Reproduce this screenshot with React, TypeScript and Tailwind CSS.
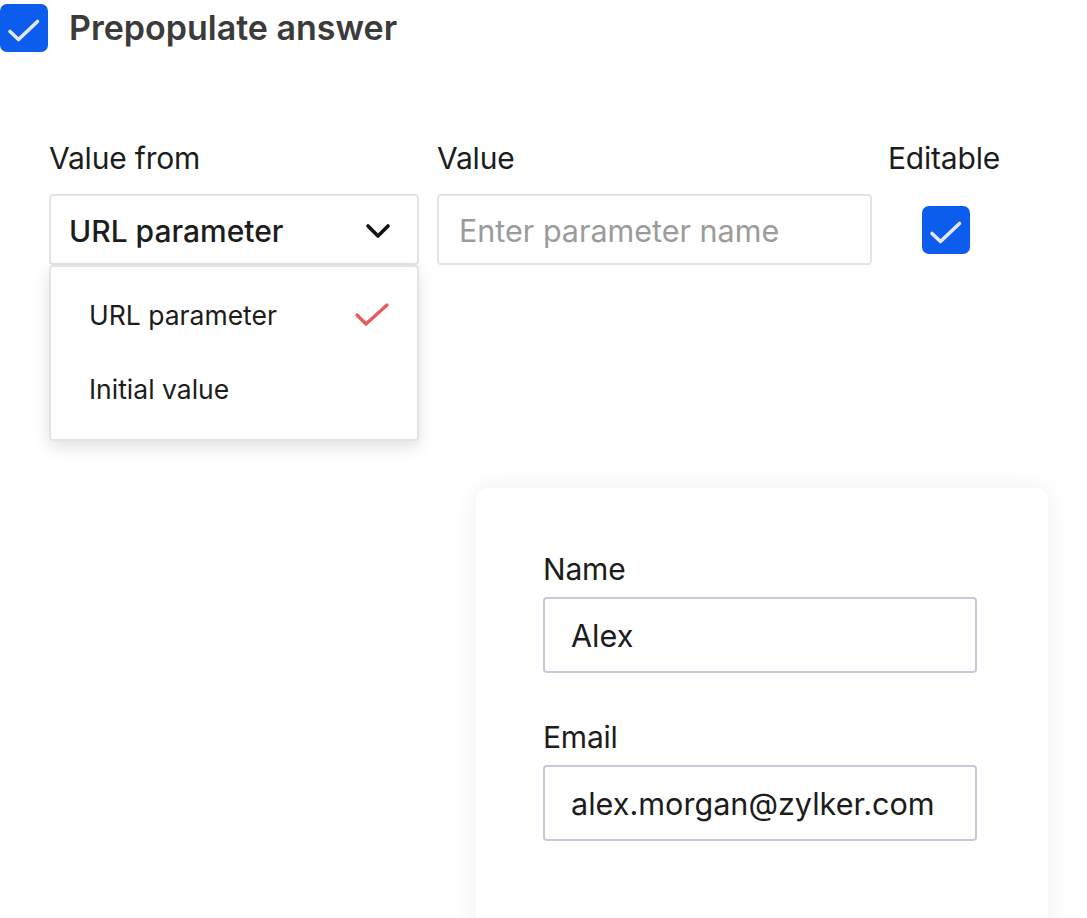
import React from "react";

function BoxCheck() {
  return (
    <div className="w-[48px] h-[48px] rounded-[7px] bg-[#0c5ced] flex items-center justify-center">
      <svg viewBox="0 0 48 48" className="w-[48px] h-[48px]" fill="none">
        <path d="M10 27.5L18.5 35.5L37.5 17.5" stroke="#e4e7ee" strokeWidth={3.6} strokeLinecap="round" strokeLinejoin="round" />
      </svg>
    </div>
  );
}

export default function App() {
  return (
    <div className="relative w-[1087px] h-[918px] overflow-hidden bg-white text-[#1c1c1c]" style={{ fontFamily: "Inter, 'Noto Sans', sans-serif" }}>
      <div className="flex items-center gap-[21px] pt-[4px]">
        <BoxCheck />
        <div className="text-[34px] font-semibold text-[#3b3b3b] leading-none">Prepopulate answer</div>
      </div>

      <div className="flex mt-[92px] ml-[49px]">
        <div className="w-[370px] flex flex-col">
          <div className="text-[30px] leading-[30px] h-[50px] -mt-[1px] mb-[1px] tracking-[-0.2px]">Value from</div>
          <div className="relative">
            <div className="h-[71px] border-2 border-[#e4e4e4] rounded-[4px] flex items-center justify-between pl-[18px] pr-[26px] pt-[3px]">
              <span className="text-[30px] font-medium">URL parameter</span>
              <svg viewBox="0 0 26 16" className="w-[26px] h-[16px] -mt-[1px]" fill="none">
                <path d="M3 3L13 13L23 3" stroke="#111" strokeWidth={3.6} strokeLinecap="round" strokeLinejoin="round" />
              </svg>
            </div>
            <div className="absolute left-0 top-[71px] w-[370px] h-[176px] bg-white border-2 border-[#e4e4e4] rounded-[4px] shadow-[0_6px_16px_rgba(0,0,0,0.12)] flex flex-col pt-[24px]">
              <div className="flex items-center justify-between pl-[38px] pr-[27px] h-[50px]">
                <span className="text-[26.5px]">URL parameter</span>
                <svg viewBox="0 0 36 28" className="w-[36px] h-[28px]" fill="none">
                  <path d="M3 13L12 22L33 3" stroke="#e85b60" strokeWidth={3.4} strokeLinecap="round" strokeLinejoin="round" />
                </svg>
              </div>
              <div className="flex items-center pl-[38px] h-[50px] mt-[24px]">
                <span className="text-[26.5px]">Initial value</span>
              </div>
            </div>
          </div>
        </div>
        <div className="w-[435px] ml-[18px] flex flex-col">
          <div className="text-[30px] leading-[30px] h-[50px] -mt-[1px] mb-[1px] tracking-[-0.2px]">Value</div>
          <div className="h-[71px] border-2 border-[#e4e4e4] rounded-[4px] flex items-center pl-[20px] pt-[3px]">
            <span className="text-[30.5px] text-[#9b9b9b]">Enter parameter name</span>
          </div>
        </div>
        <div className="ml-[16px] flex flex-col">
          <div className="text-[30px] leading-[30px] h-[50px] -mt-[1px] mb-[1px] tracking-[-0.2px]">Editable</div>
          <div className="h-[71px] flex items-center pl-[34px]">
            <BoxCheck />
          </div>
        </div>
      </div>

      <div className="ml-[476px] mt-[223px] w-[572px] h-[500px] bg-white rounded-[12px] shadow-[0_0_24px_rgba(0,0,0,0.07)] pt-[66px] pl-[67px]">
        <div className="text-[30px] leading-[30px] tracking-[-0.2px]">Name</div>
        <div className="mt-[13px] w-[434px] h-[76px] border-2 border-[#c9c7db] rounded-[4px] flex items-center pl-[26px] pt-[2px]">
          <span className="text-[30.6px]">Alex</span>
        </div>
        <div className="mt-[49px] text-[30px] leading-[30px] tracking-[-0.2px]">Email</div>
        <div className="mt-[13px] w-[434px] h-[76px] border-2 border-[#c9c7db] rounded-[4px] flex items-center pl-[26px] pt-[2px]">
          <span className="text-[30.6px]">alex.morgan@zylker.com</span>
        </div>
      </div>
    </div>
  );
}
